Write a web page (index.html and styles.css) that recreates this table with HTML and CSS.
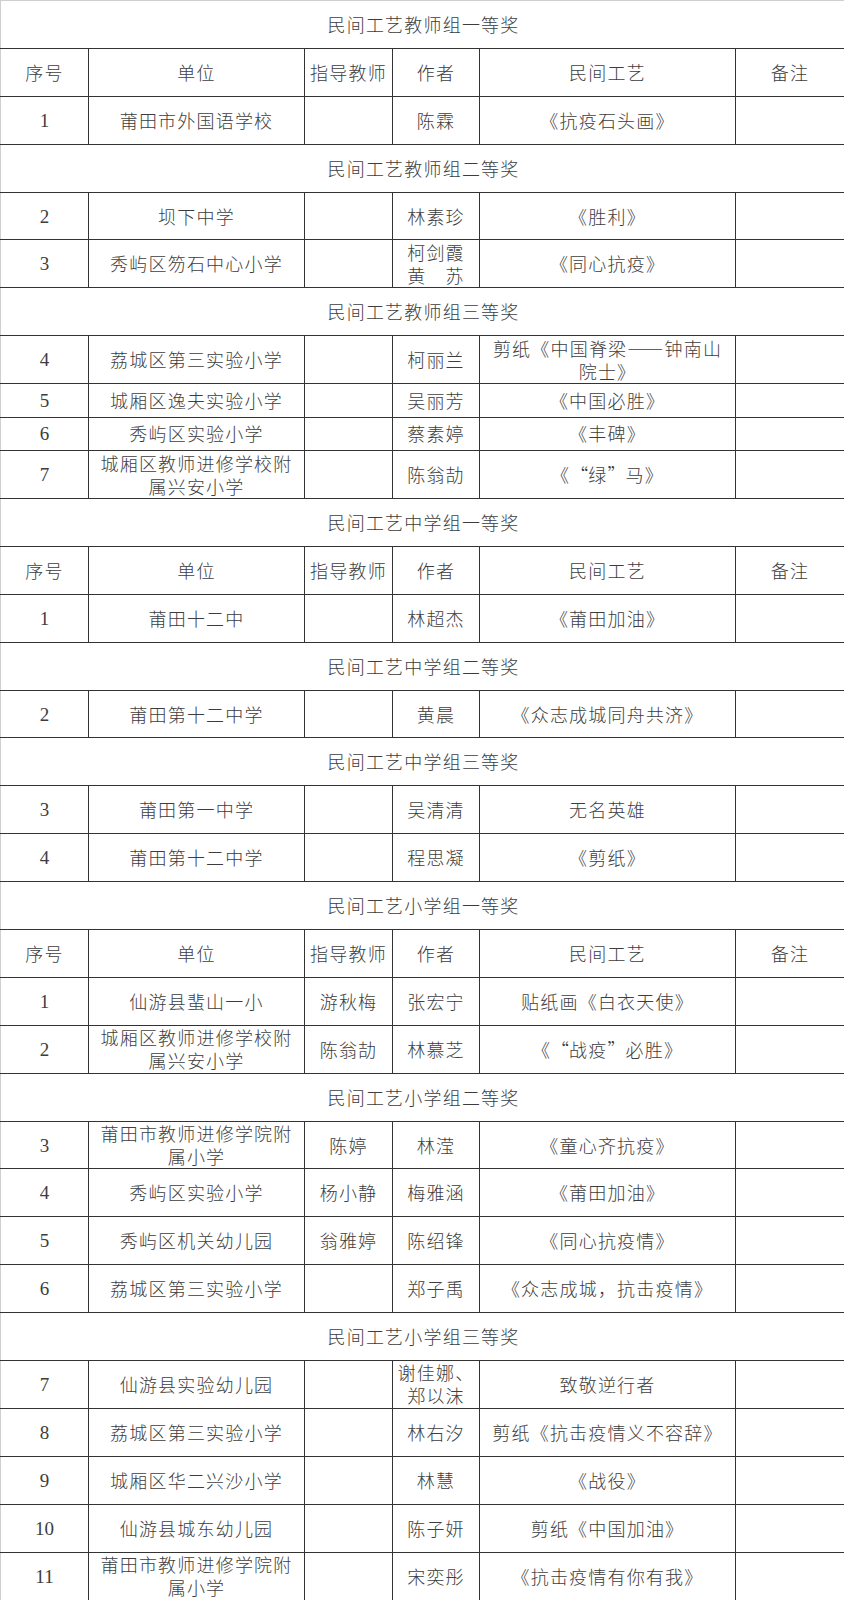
FILE: index.html
```html
<!DOCTYPE html>
<html lang="zh-CN">
<head>
<meta charset="utf-8">
<title>民间工艺获奖名单</title>
<link rel="stylesheet" href="styles.css">
</head>
<body>
<table class="awards">
  <colgroup>
    <col class="c-no"><col class="c-unit"><col class="c-tutor"><col class="c-author"><col class="c-work"><col class="c-note">
  </colgroup>
  <tbody>
    <tr class="title"><td colspan="6">民间工艺教师组一等奖</td></tr>
    <tr><td>序号</td><td>单位</td><td>指导教师</td><td>作者</td><td>民间工艺</td><td>备注</td></tr>
    <tr><td class="num">1</td><td>莆田市外国语学校</td><td></td><td>陈霖</td><td>《抗疫石头画》</td><td></td></tr>

    <tr class="title"><td colspan="6">民间工艺教师组二等奖</td></tr>
    <tr><td class="num">2</td><td>坝下中学</td><td></td><td>林素珍</td><td>《胜利》</td><td></td></tr>
    <tr><td class="num">3</td><td>秀屿区笏石中心小学</td><td></td><td class="two">柯剑霞<br>黄　苏</td><td>《同心抗疫》</td><td></td></tr>

    <tr class="title"><td colspan="6">民间工艺教师组三等奖</td></tr>
    <tr><td class="num">4</td><td>荔城区第三实验小学</td><td></td><td>柯丽兰</td><td class="two">剪纸《中国脊梁——钟南山<br>院士》</td><td></td></tr>
    <tr class="short"><td class="num">5</td><td>城厢区逸夫实验小学</td><td></td><td>吴丽芳</td><td>《中国必胜》</td><td></td></tr>
    <tr class="short"><td class="num">6</td><td>秀屿区实验小学</td><td></td><td>蔡素婷</td><td>《丰碑》</td><td></td></tr>
    <tr><td class="num">7</td><td class="two">城厢区教师进修学校附<br>属兴安小学</td><td></td><td>陈翁劼</td><td>《<span class="ql">“</span>绿<span class="qr">”</span>马》</td><td></td></tr>

    <tr class="title"><td colspan="6">民间工艺中学组一等奖</td></tr>
    <tr><td>序号</td><td>单位</td><td>指导教师</td><td>作者</td><td>民间工艺</td><td>备注</td></tr>
    <tr><td class="num">1</td><td>莆田十二中</td><td></td><td>林超杰</td><td>《莆田加油》</td><td></td></tr>

    <tr class="title"><td colspan="6">民间工艺中学组二等奖</td></tr>
    <tr><td class="num">2</td><td>莆田第十二中学</td><td></td><td>黄晨</td><td>《众志成城同舟共济》</td><td></td></tr>

    <tr class="title"><td colspan="6">民间工艺中学组三等奖</td></tr>
    <tr><td class="num">3</td><td>莆田第一中学</td><td></td><td>吴清清</td><td>无名英雄</td><td></td></tr>
    <tr><td class="num">4</td><td>莆田第十二中学</td><td></td><td>程思凝</td><td>《剪纸》</td><td></td></tr>

    <tr class="title"><td colspan="6">民间工艺小学组一等奖</td></tr>
    <tr><td>序号</td><td>单位</td><td>指导教师</td><td>作者</td><td>民间工艺</td><td>备注</td></tr>
    <tr><td class="num">1</td><td>仙游县蜚山一小</td><td>游秋梅</td><td>张宏宁</td><td>贴纸画《白衣天使》</td><td></td></tr>
    <tr><td class="num">2</td><td class="two">城厢区教师进修学校附<br>属兴安小学</td><td>陈翁劼</td><td>林慕芝</td><td>《<span class="ql">“</span>战疫<span class="qr">”</span>必胜》</td><td></td></tr>

    <tr class="title"><td colspan="6">民间工艺小学组二等奖</td></tr>
    <tr><td class="num">3</td><td class="two">莆田市教师进修学院附<br>属小学</td><td>陈婷</td><td>林滢</td><td>《童心齐抗疫》</td><td></td></tr>
    <tr><td class="num">4</td><td>秀屿区实验小学</td><td>杨小静</td><td>梅雅涵</td><td>《莆田加油》</td><td></td></tr>
    <tr><td class="num">5</td><td>秀屿区机关幼儿园</td><td>翁雅婷</td><td>陈绍锋</td><td>《同心抗疫情》</td><td></td></tr>
    <tr><td class="num">6</td><td>荔城区第三实验小学</td><td></td><td>郑子禹</td><td>《众志成城，抗击疫情》</td><td></td></tr>

    <tr class="title"><td colspan="6">民间工艺小学组三等奖</td></tr>
    <tr><td class="num">7</td><td>仙游县实验幼儿园</td><td></td><td class="two">谢佳娜、<br>郑以沫</td><td>致敬逆行者</td><td></td></tr>
    <tr><td class="num">8</td><td>荔城区第三实验小学</td><td></td><td>林右汐</td><td>剪纸《抗击疫情义不容辞》</td><td></td></tr>
    <tr><td class="num">9</td><td>城厢区华二兴沙小学</td><td></td><td>林慧</td><td>《战役》</td><td></td></tr>
    <tr><td class="num">10</td><td>仙游县城东幼儿园</td><td></td><td>陈子妍</td><td>剪纸《中国加油》</td><td></td></tr>
    <tr><td class="num">11</td><td class="two">莆田市教师进修学院附<br>属小学</td><td></td><td>宋奕彤</td><td>《抗击疫情有你有我》</td><td></td></tr>
  </tbody>
</table>
</body>
</html>
```

FILE: styles.css
```css
html, body {
  margin: 0;
  padding: 0;
  background: #ffffff;
}

.awards {
  width: 844px;
  table-layout: fixed;
  border-collapse: collapse;
  font-family: "Noto Sans CJK SC", "Liberation Serif", serif;
  font-weight: 300;
  font-size: 18px;
  letter-spacing: 1.2px;
  color: #3d3d3d;
}

.c-no { width: 88px; }
.c-unit { width: 216px; }
.c-tutor { width: 88px; }
.c-author { width: 87px; }
.c-work { width: 256px; }
.c-note { width: 109px; }

.awards td {
  height: 46.9px;
  padding: 0;
  text-align: center;
  vertical-align: middle;
  border: 1px solid #333333;
  white-space: nowrap;
  line-height: 23px;
}

.awards tr.short td {
  height: 32.5px;
}

.awards tr td:first-child {
  border-left-color: #cfcfcf;
}

.awards tr:first-child td {
  border-top-color: #cfcfcf;
}

.awards tr td:last-child {
  border-right-color: #555555;
}

.awards tr.title td {
  text-align: center;
  padding-left: 2px;
}

.awards td.num {
  font-family: "Liberation Serif", serif;
  font-weight: 400;
  font-size: 19px;
  letter-spacing: 0;
}

.awards td.two {
  line-height: 23px;
}

.ql,
.qr {
  display: inline-block;
  width: 1em;
}

.ql {
  text-align: right;
}

.qr {
  text-align: left;
}
```
